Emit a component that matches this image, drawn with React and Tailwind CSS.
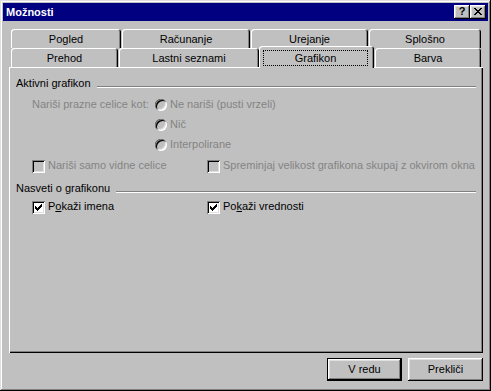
import React from "react";

const bevelBtn =
  "shadow-[inset_-1px_-1px_0_#000,inset_1px_1px_0_#fff,inset_-2px_-2px_0_#808080,inset_2px_2px_0_#dfdfdf]";
const sunken =
  "shadow-[inset_1px_1px_0_#808080,inset_-1px_-1px_0_#fff,inset_2px_2px_0_#000,inset_-2px_-2px_0_#dfdfdf]";
const tabShadow =
  "shadow-[inset_1px_1px_0_#fff,inset_-1px_0_0_#000,inset_-2px_0_0_#808080] rounded-t-[3px]";
const disabledText = "text-[#848484]";

function Check({ checked, disabled }) {
  const px = [
    [6, 0], [5, 1], [6, 1], [0, 2], [4, 2], [5, 2], [6, 2],
    [0, 3], [1, 3], [3, 3], [4, 3], [5, 3],
    [0, 4], [1, 4], [2, 4], [3, 4], [4, 4],
    [1, 5], [2, 5], [3, 5], [2, 6],
  ];
  return (
    <div
      className={`w-[13px] h-[13px] shrink-0 ${sunken} ${
        disabled ? "bg-[#c0c0c0]" : "bg-white"
      }`}
    >
      {checked && (
        <svg width="13" height="13" viewBox="0 0 13 13" shapeRendering="crispEdges">
          {px.map(([x, y], i) => (
            <rect key={i} x={x + 3} y={y + 3} width="1" height="1" fill="#000" />
          ))}
        </svg>
      )}
    </div>
  );
}

function Radio() {
  return (
    <div className={`w-[12px] h-[12px] shrink-0 rounded-full bg-[#c0c0c0] ${sunken}`} />
  );
}

function Tab({ w, children }) {
  return (
    <div
      className={`h-[19px] flex justify-center pt-[4px] ${tabShadow}`}
      style={{ width: w }}
    >
      {children}
    </div>
  );
}

function GroupHeader({ children }) {
  return (
    <div className="flex items-start h-[13px]">
      <span className="text-black">{children}</span>
      <div className="flex-1 ml-[6px] mt-[9px] h-[2px] border-t border-b border-t-[#808080] border-b-white" />
    </div>
  );
}

export default function App() {
  return (
    <div className="w-[491px] h-[391px] bg-[#c0c0c0] p-[3px] flex flex-col font-['Liberation_Sans',Arial,sans-serif] text-[11px] leading-[13px] text-black shadow-[inset_-1px_-1px_0_#000,inset_1px_1px_0_#dfdfdf,inset_-2px_-2px_0_#808080,inset_2px_2px_0_#fff]">
      {/* Title bar */}
      <div className="h-[18px] bg-[#000080] flex items-center justify-between pl-[3px] pr-[2px]">
        <span className="text-white font-bold text-[11px] leading-[13px]">Možnosti</span>
        <div className="flex">
          <div className={`w-[16px] h-[14px] bg-[#c0c0c0] flex items-center justify-center ${bevelBtn}`}>
            <span className="font-bold text-[11px] leading-[11px] text-black -mt-[1px]">?</span>
          </div>
          <div className={`w-[16px] h-[14px] bg-[#c0c0c0] flex items-center justify-center ${bevelBtn}`}>
            <svg width="8" height="7" viewBox="0 0 8 7" shapeRendering="crispEdges" className="-mt-[1px] -ml-[1px]">
              {[
                [0, 0], [1, 0], [6, 0], [7, 0],
                [1, 1], [2, 1], [5, 1], [6, 1],
                [2, 2], [3, 2], [4, 2], [5, 2],
                [3, 3], [4, 3],
                [2, 4], [3, 4], [4, 4], [5, 4],
                [1, 5], [2, 5], [5, 5], [6, 5],
                [0, 6], [1, 6], [6, 6], [7, 6],
              ].map(([x, y], i) => (
                <rect key={i} x={x} y={y} width="1" height="1" fill="#000" />
              ))}
            </svg>
          </div>
        </div>
      </div>

      {/* Tabs + panel */}
      <div className="ml-[6px] mr-[5px] flex flex-col">
        <div className="ml-[2px] mt-[8px] flex gap-[1px]">
          <Tab w={110}>Pogled</Tab>
          <Tab w={128}>Računanje</Tab>
          <Tab w={117}>Urejanje</Tab>
          <Tab w={112}>Splošno</Tab>
        </div>
        <div className="ml-[2px] h-[19px] flex items-end">
          <Tab w={107}>Prehod</Tab>
          <div className="w-[1px]" />
          <Tab w={140}>Lastni seznami</Tab>
          <div
            className={`relative z-10 w-[115px] h-[22px] -mb-[1px] bg-[#c0c0c0] pt-[4px] pl-[4px] ${tabShadow}`}
          >
            <div className="w-[105px] h-[16px] border border-dotted border-black flex justify-center items-center leading-[14px]">
              Grafikon
            </div>
          </div>
          <div className="w-[1px]" />
          <Tab w={106}>Barva</Tab>
        </div>

        {/* Panel */}
        <div className="h-[286px] px-[7px] pt-[10px] flex flex-col shadow-[inset_1px_1px_0_#fff,inset_-1px_-1px_0_#000,inset_-2px_-2px_0_#808080]">
          <GroupHeader>Aktivni grafikon</GroupHeader>

          <div className="mt-[8px] ml-[16px] flex">
            <div className={`w-[123px] ${disabledText}`}>Nariši prazne celice kot:</div>
            <div className="flex flex-col gap-[7px]">
              <div className="flex items-center h-[13px]">
                <Radio />
                <span className={`ml-[3px] ${disabledText}`}>Ne nariši (pusti vrzeli)</span>
              </div>
              <div className="flex items-center h-[13px]">
                <Radio />
                <span className={`ml-[3px] ${disabledText}`}>Nič</span>
              </div>
              <div className="flex items-center h-[13px]">
                <Radio />
                <span className={`ml-[3px] ${disabledText}`}>Interpolirane</span>
              </div>
            </div>
          </div>

          <div className="mt-[8px] ml-[16px] flex h-[13px]">
            <div className="w-[175px] flex items-start">
              <div className="mt-[1px]">
                <Check disabled />
              </div>
              <span className={`ml-[3px] ${disabledText}`}>Nariši samo vidne celice</span>
            </div>
            <div className="flex items-start">
              <div className="mt-[1px]">
                <Check disabled />
              </div>
              <span className={`ml-[3px] ${disabledText}`}>
                Spreminjaj velikost grafikona skupaj z okvirom okna
              </span>
            </div>
          </div>

          <div className="mt-[10px]">
            <GroupHeader>Nasveti o grafikonu</GroupHeader>
          </div>

          <div className="mt-[5px] ml-[16px] flex h-[13px]">
            <div className="w-[175px] flex items-start">
              <div className="mt-[1px]">
                <Check checked />
              </div>
              <span className="ml-[3px]">
                P<span className="underline">o</span>kaži imena
              </span>
            </div>
            <div className="flex items-start">
              <div className="mt-[1px]">
                <Check checked />
              </div>
              <span className="ml-[3px]">
                Po<span className="underline">k</span>aži vrednosti
              </span>
            </div>
          </div>
        </div>

        {/* Buttons */}
        <div className="mt-[5px] flex justify-end gap-[6px]">
          <div className="w-[75px] h-[23px] border border-black bg-[#c0c0c0]">
            <div className={`w-full h-full flex items-center justify-center ${bevelBtn}`}>
              V redu
            </div>
          </div>
          <div className={`w-[75px] h-[23px] bg-[#c0c0c0] flex items-center justify-center ${bevelBtn}`}>
            Prekliči
          </div>
        </div>
      </div>
    </div>
  );
}
